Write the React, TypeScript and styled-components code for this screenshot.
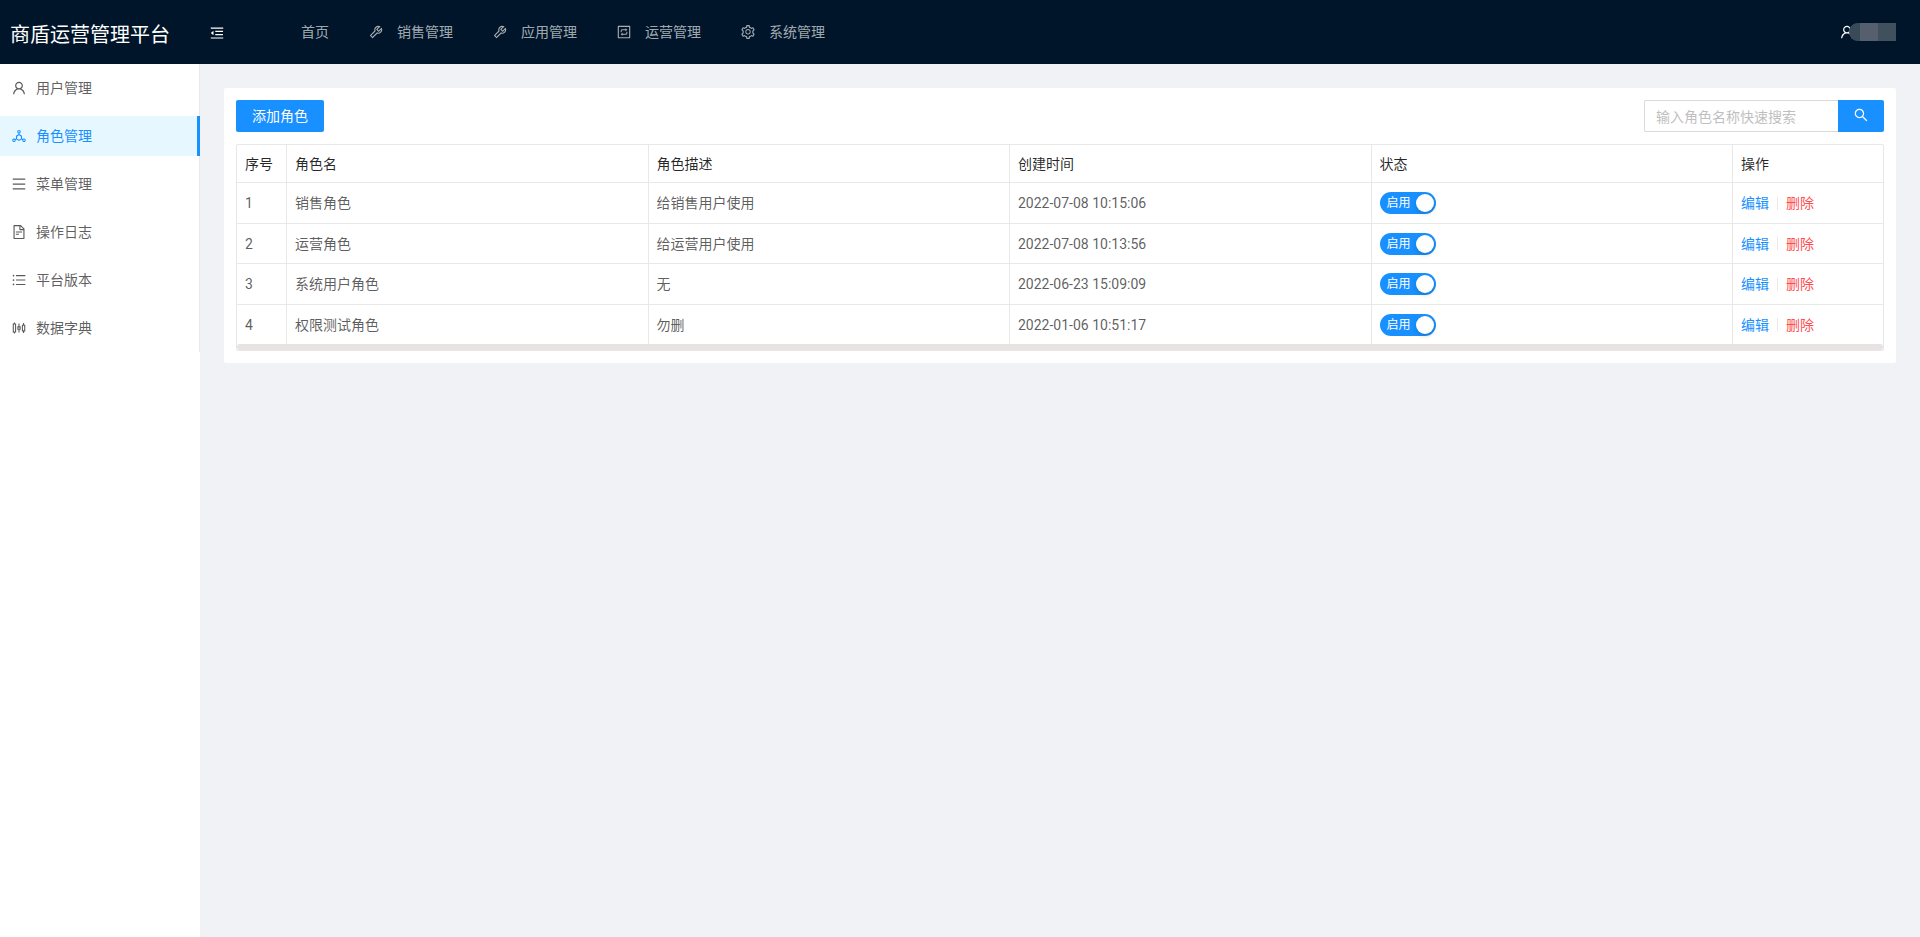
import React, { useState } from "react";
import styled, { createGlobalStyle } from "styled-components";
import {
  AiOutlineDeploymentUnit,
  AiOutlineFileText,
  AiOutlineInteraction,
  AiOutlineMenu,
  AiOutlineMenuFold,
  AiOutlineSearch,
  AiOutlineSetting,
  AiOutlineSliders,
  AiOutlineTool,
  AiOutlineUnorderedList,
  AiOutlineUser,
} from "react-icons/ai";

const primary = "#1890ff";
const line = "#e8e8e8";

const GlobalStyle = createGlobalStyle`
  *, *::before, *::after { box-sizing: border-box; }
  body {
    margin: 0;
    background: #f0f2f5;
    color: rgba(0, 0, 0, 0.65);
    font-family: Roboto, "Noto Sans CJK SC", sans-serif;
    font-size: 14px;
    font-weight: 400;
    line-height: 22px;
  }
  button, input { font: inherit; }
  /* the glyphs carry a margin inside their view box, so they are drawn at 16px in a 14px slot */
  svg {
    display: block;
    flex: none;
    width: 16px;
    height: 16px;
    margin: -1px;
  }
`;

const Page = styled.div`
  display: flex;
  flex-direction: column;
  min-height: 100vh;
`;

const Header = styled.header`
  display: flex;
  align-items: center;
  height: 64px;
  padding: 0 24px 0 10px;
  background: #001529;
  color: #fff;
`;

const Brand = styled.h1`
  margin: 0;
  padding-top: 6px;
  font-size: 20px;
  font-weight: 400;
  line-height: 28px;
`;

const FoldButton = styled.button`
  display: flex;
  margin: 2px 57px 0 40px;
  padding: 0;
  border: 0;
  background: none;
  color: #fff;
  cursor: pointer;
`;

const TopNav = styled.nav`
  display: flex;
  flex: 1;
`;

const TopLink = styled.a`
  display: flex;
  align-items: center;
  gap: 14px;
  padding: 0 20px;
  color: rgba(255, 255, 255, 0.65);
  text-decoration: none;
  &:hover { color: #fff; }
`;

const UserMenu = styled.button`
  display: flex;
  align-items: center;
  padding: 0;
  border: 0;
  background: none;
  color: #fff;
  cursor: pointer;
`;

const NameMask = styled.span`
  position: relative;
  display: flex;
  width: 47px;
  height: 18px;
  margin-left: -5px;
  overflow: hidden;
  border-radius: 8px 0 0 8px / 9px 0 0 9px;
`;

const MaskBlock = styled.span<{ $tone: string; $grow: number }>`
  flex: ${(p) => p.$grow} 1 0;
  background: ${(p) => p.$tone};
`;

const Body = styled.div`
  display: flex;
  flex: 1;
`;

const Sidebar = styled.aside`
  flex: 0 0 200px;
  background: #fff;
`;

const SideMenu = styled.nav`
  display: flex;
  flex-direction: column;
  gap: 8px;
  padding: 4px 0;
  box-shadow: inset -1px 0 ${line};
`;

const SideLink = styled.a<{ $active?: boolean }>`
  display: flex;
  align-items: center;
  gap: 10px;
  height: 40px;
  padding: 0 12px;
  border-right: 3px solid ${(p) => (p.$active ? primary : "transparent")};
  background: ${(p) => (p.$active ? "#e6f7ff" : "transparent")};
  color: ${(p) => (p.$active ? primary : "inherit")};
  text-decoration: none;
  &:hover { color: ${primary}; }
`;

const Content = styled.main`
  flex: 1;
  min-width: 0;
  padding: 24px;
`;

const Card = styled.section`
  display: flex;
  flex-direction: column;
  gap: 12px;
  padding: 12px;
  border-radius: 2px;
  background: #fff;
`;

const Toolbar = styled.div`
  display: flex;
  justify-content: space-between;
`;

const PrimaryButton = styled.button`
  height: 32px;
  padding: 0 16px;
  border: 0;
  border-radius: 2px;
  background: ${primary};
  color: #fff;
  cursor: pointer;
`;

const SearchForm = styled.form`
  display: flex;
  width: 240px;
`;

const SearchInput = styled.input`
  flex: 1;
  min-width: 0;
  height: 32px;
  padding: 2px 11px 0;
  border: 1px solid #d9d9d9;
  border-right: 0;
  border-radius: 2px 0 0 2px;
  outline: 0;
  &::placeholder { color: #bfbfbf; }
`;

const SearchButton = styled(PrimaryButton)`
  width: 46px;
  padding-bottom: 2px;
  border-radius: 0 2px 2px 0;
`;

const TableFrame = styled.div`
  border: 1px solid ${line};
  border-radius: 2px;
`;

const Table = styled.table`
  width: 100%;
  table-layout: fixed;
  border-collapse: separate;
  border-spacing: 0;
`;

const Row = styled.tr`
  height: 40px;
  &:nth-child(odd) { height: 41px; }
  &:last-child { height: 39px; }
  &:last-child td { border-bottom: 0; }
`;

const cell = `
  padding: 0 8px;
  border-right: 1px solid ${line};
  border-bottom: 1px solid ${line};
  text-align: left;
  &:last-child { border-right: 0; }
`;

const HeadCell = styled.th<{ $width?: number }>`
  ${cell}
  width: ${(p) => (p.$width ? `${p.$width}px` : "auto")};
  height: 38px;
  color: rgba(0, 0, 0, 0.85);
  font-weight: 400;
`;

const Cell = styled.td`
  ${cell}
`;

const ScrollBar = styled.div`
  height: 6px;
  border-radius: 3px;
  background: #e8e2e3;
`;

const SwitchTrack = styled.label<{ $on: boolean }>`
  display: flex;
  flex-direction: ${(p) => (p.$on ? "row" : "row-reverse")};
  align-items: center;
  justify-content: space-between;
  position: relative;
  width: 56px;
  height: 22px;
  padding: ${(p) => (p.$on ? "0 2px 0 7px" : "0 7px 0 2px")};
  border-radius: 11px;
  background: ${(p) => (p.$on ? primary : "#bfbfbf")};
  color: #fff;
  font-size: 12px;
  cursor: pointer;
`;

const SwitchInput = styled.input`
  position: absolute;
  inset: 0;
  margin: 0;
  opacity: 0;
  cursor: pointer;
`;

const Knob = styled.span`
  width: 18px;
  height: 18px;
  border-radius: 9px;
  background: #fff;
  box-shadow: 0 2px 4px rgba(0, 35, 11, 0.2);
`;

const Actions = styled.div`
  display: flex;
  align-items: center;
`;

const ActionLink = styled.a<{ $danger?: boolean }>`
  color: ${(p) => (p.$danger ? "#ff4d4f" : primary)};
  text-decoration: none;
`;

const Divider = styled.span`
  width: 1px;
  height: 13px;
  margin: 0 8px;
  background: ${line};
`;

const topItems = [
  { label: "首页" },
  { label: "销售管理", Icon: AiOutlineTool },
  { label: "应用管理", Icon: AiOutlineTool },
  { label: "运营管理", Icon: AiOutlineInteraction },
  { label: "系统管理", Icon: AiOutlineSetting },
];

const sideItems = [
  { label: "用户管理", Icon: AiOutlineUser },
  { label: "角色管理", Icon: AiOutlineDeploymentUnit, active: true },
  { label: "菜单管理", Icon: AiOutlineMenu },
  { label: "操作日志", Icon: AiOutlineFileText },
  { label: "平台版本", Icon: AiOutlineUnorderedList },
  { label: "数据字典", Icon: AiOutlineSliders },
];

const roles = [
  { id: 1, name: "销售角色", desc: "给销售用户使用", created: "2022-07-08 10:15:06" },
  { id: 2, name: "运营角色", desc: "给运营用户使用", created: "2022-07-08 10:13:56" },
  { id: 3, name: "系统用户角色", desc: "无", created: "2022-06-23 15:09:09" },
  { id: 4, name: "权限测试角色", desc: "勿删", created: "2022-01-06 10:51:17" },
];

function StatusSwitch({ name }: { name: string }) {
  const [on, setOn] = useState(true);
  return (
    <SwitchTrack $on={on}>
      <SwitchInput
        type="checkbox"
        role="switch"
        aria-label={`${name}状态`}
        checked={on}
        onChange={(e) => setOn(e.target.checked)}
      />
      <span>{on ? "启用" : "禁用"}</span>
      <Knob />
    </SwitchTrack>
  );
}

export default function App() {
  return (
    <Page lang="zh-CN">
      <GlobalStyle />
      <Header>
        <Brand>商盾运营管理平台</Brand>
        <FoldButton type="button" aria-label="收起菜单">
          <AiOutlineMenuFold />
        </FoldButton>
        <TopNav>
          {topItems.map(({ label, Icon }) => (
            <TopLink key={label} href="#">
              {Icon && <Icon />}
              <span>{label}</span>
            </TopLink>
          ))}
        </TopNav>
        <UserMenu type="button" aria-label="用户">
          <AiOutlineUser />
          <NameMask>
            <MaskBlock $tone="#394a5a" $grow={11} />
            <MaskBlock $tone="#565f6d" $grow={18} />
            <MaskBlock $tone="#41505d" $grow={18} />
          </NameMask>
        </UserMenu>
      </Header>
      <Body>
        <Sidebar>
          <SideMenu>
            {sideItems.map(({ label, Icon, active }) => (
              <SideLink key={label} href="#" $active={active}>
                <Icon />
                <span>{label}</span>
              </SideLink>
            ))}
          </SideMenu>
        </Sidebar>
        <Content>
          <Card>
            <Toolbar>
              <PrimaryButton type="button">添加角色</PrimaryButton>
              <SearchForm onSubmit={(e) => e.preventDefault()}>
                <SearchInput
                  type="text"
                  aria-label="角色名称"
                  placeholder="输入角色名称快速搜索"
                />
                <SearchButton type="submit" aria-label="搜索">
                  <AiOutlineSearch />
                </SearchButton>
              </SearchForm>
            </Toolbar>
            <TableFrame>
              <Table>
                <thead>
                  <tr>
                    <HeadCell $width={50}>序号</HeadCell>
                    <HeadCell>角色名</HeadCell>
                    <HeadCell>角色描述</HeadCell>
                    <HeadCell>创建时间</HeadCell>
                    <HeadCell>状态</HeadCell>
                    <HeadCell $width={150}>操作</HeadCell>
                  </tr>
                </thead>
                <tbody>
                  {roles.map((role) => (
                    <Row key={role.id}>
                      <Cell>{role.id}</Cell>
                      <Cell>{role.name}</Cell>
                      <Cell>{role.desc}</Cell>
                      <Cell>{role.created}</Cell>
                      <Cell>
                        <StatusSwitch name={role.name} />
                      </Cell>
                      <Cell>
                        <Actions>
                          <ActionLink href="#">编辑</ActionLink>
                          <Divider />
                          <ActionLink href="#" $danger>
                            删除
                          </ActionLink>
                        </Actions>
                      </Cell>
                    </Row>
                  ))}
                </tbody>
              </Table>
              <ScrollBar />
            </TableFrame>
          </Card>
        </Content>
      </Body>
    </Page>
  );
}
